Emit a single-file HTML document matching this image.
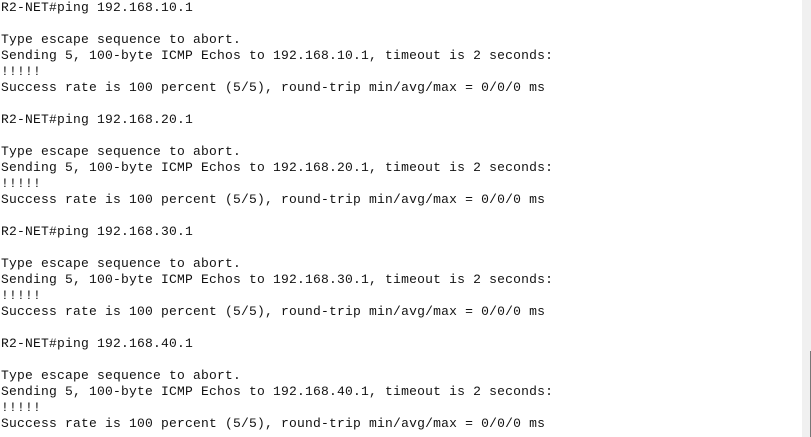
<!DOCTYPE html>
<html><head><style>
html,body{margin:0;padding:0;background:#fff;width:811px;height:437px;overflow:hidden}
pre{margin:0;padding:0 0 0 1px;font-family:"Liberation Mono",monospace;font-size:13px;letter-spacing:0.2px;line-height:16px;color:#111;position:absolute;top:0;left:0}
.sb{position:absolute;left:802px;top:0;width:9px;height:437px;background:#f0f0f0}
.th{position:absolute;left:810px;top:351px;width:1px;height:86px;background:#777}
</style></head><body>
<pre>R2-NET#ping 192.168.10.1

Type escape sequence to abort.
Sending 5, 100-byte ICMP Echos to 192.168.10.1, timeout is 2 seconds:
!!!!!
Success rate is 100 percent (5/5), round-trip min/avg/max = 0/0/0 ms

R2-NET#ping 192.168.20.1

Type escape sequence to abort.
Sending 5, 100-byte ICMP Echos to 192.168.20.1, timeout is 2 seconds:
!!!!!
Success rate is 100 percent (5/5), round-trip min/avg/max = 0/0/0 ms

R2-NET#ping 192.168.30.1

Type escape sequence to abort.
Sending 5, 100-byte ICMP Echos to 192.168.30.1, timeout is 2 seconds:
!!!!!
Success rate is 100 percent (5/5), round-trip min/avg/max = 0/0/0 ms

R2-NET#ping 192.168.40.1

Type escape sequence to abort.
Sending 5, 100-byte ICMP Echos to 192.168.40.1, timeout is 2 seconds:
!!!!!
Success rate is 100 percent (5/5), round-trip min/avg/max = 0/0/0 ms</pre>
<div class="sb"></div><div class="th"></div>
</body></html>
